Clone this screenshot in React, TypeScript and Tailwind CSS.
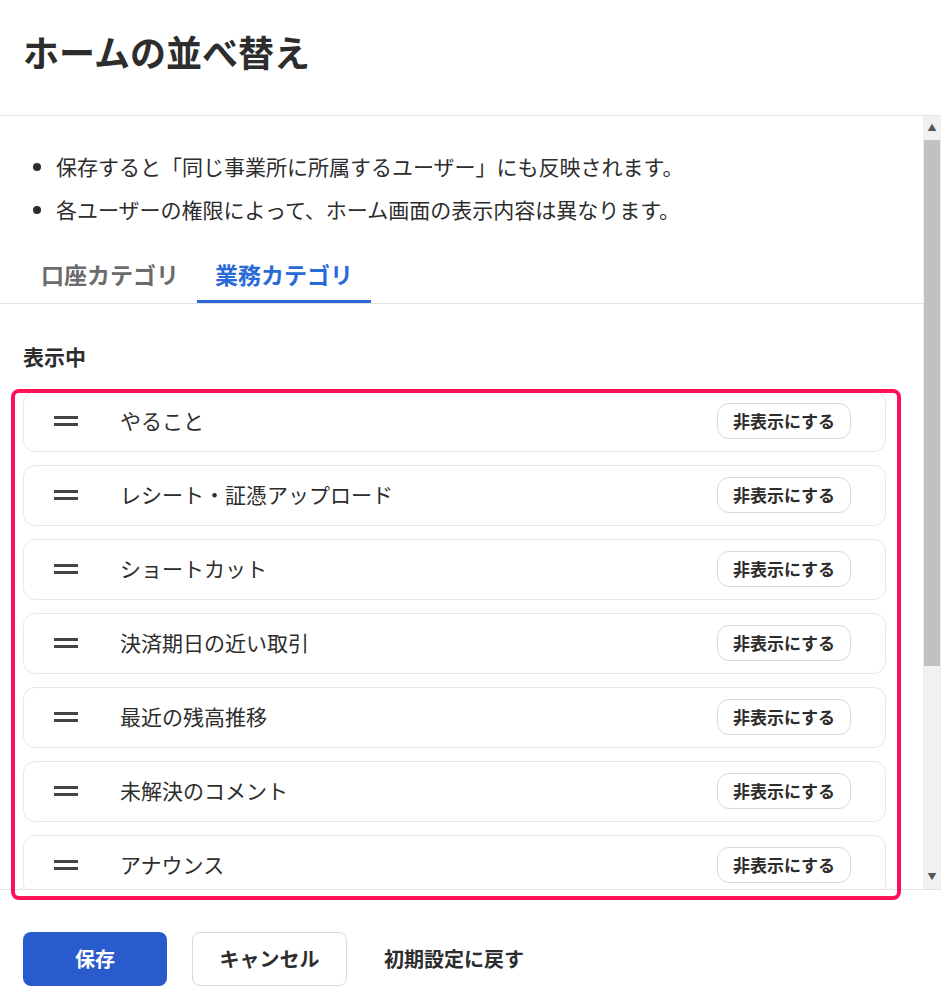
import React from "react";

const items = ["やること","レシート・証憑アップロード","ショートカット","決済期日の近い取引","最近の残高推移","未解決のコメント","アナウンス"];

export default function App() {
  return (
    <div className="relative w-[941px] h-[1005px] bg-white text-[#2d2d2d] overflow-hidden" style={{fontFamily:'"Noto Sans CJK JP","Noto Sans",sans-serif'}}>
      <div className="h-[116px] border-b border-[#e2e2e2] flex items-center px-[23px]">
        <h1 className="text-[36px] font-bold pb-[14px]">ホームの並べ替え</h1>
      </div>
      <div className="flex h-[773px]">
        <div className="flex-1 overflow-hidden">
          <ul className="pt-[29px] pl-[56px] pr-4 list-disc text-[21px] leading-[43px]">
            <li>保存すると「同じ事業所に所属するユーザー」にも反映されます。</li>
            <li>各ユーザーの権限によって、ホーム画面の表示内容は異なります。</li>
          </ul>
          <div className="mt-[15px] flex border-b border-[#e2e2e2] px-[23px]">
            <div className="px-[18px] h-[57px] flex items-center text-[23px] font-bold text-[#6b6b6b]">口座カテゴリ</div>
            <div className="px-[18px] h-[57px] flex items-center text-[23px] font-bold text-[#2a6ad8] border-b-[3px] border-[#2a6ad8] pt-[3px]">業務カテゴリ</div>
          </div>
          <div className="px-[23px] pr-[37px]">
            <div className="mt-[37px] text-[21px] font-bold">表示中</div>
            <div className="mt-[18px] flex flex-col gap-[13px]">
              {items.map(t => (
                <div key={t} className="h-[61px] shrink-0 border border-[#e8e8e8] rounded-xl flex items-center pl-[30px] pr-[34px]">
                  <div className="w-[24px] flex flex-col gap-[4px]">
                    <div className="h-[3px] bg-[#444]" /><div className="h-[3px] bg-[#444]" />
                  </div>
                  <div className="ml-[42px] flex-1 text-[21px]">{t}</div>
                  <button className="w-[134px] h-[36px] border border-[#d8d8d8] rounded-xl text-[17px] font-bold">非表示にする</button>
                </div>
              ))}
            </div>
          </div>
        </div>
        <div className="w-[18px] bg-[#f1f1f1] flex flex-col items-center">
          <div className="h-[24px] flex items-center justify-center text-[9px] text-[#555]">▲</div>
          <div className="w-[16px] h-[526px] bg-[#c1c1c1]" />
          <div className="flex-1" />
          <div className="h-[24px] flex items-center justify-center text-[9px] text-[#555]">▼</div>
        </div>
      </div>
      <div className="absolute left-[11px] top-[389px] w-[890px] h-[511px] border-[4px] border-[#ff1159] rounded-[8px]" />
      <div className="border-t border-[#e2e2e2] flex items-center gap-[25px] px-[23px] pt-[42px]">
        <button className="w-[144px] h-[54px] rounded-lg bg-[#2a5bcc] text-white text-[20px] font-bold">保存</button>
        <button className="w-[155px] h-[54px] rounded-lg border border-[#d8d8d8] text-[20px] font-bold">キャンセル</button>
        <button className="ml-[12px] text-[20px] font-bold">初期設定に戻す</button>
      </div>
    </div>
  );
}
